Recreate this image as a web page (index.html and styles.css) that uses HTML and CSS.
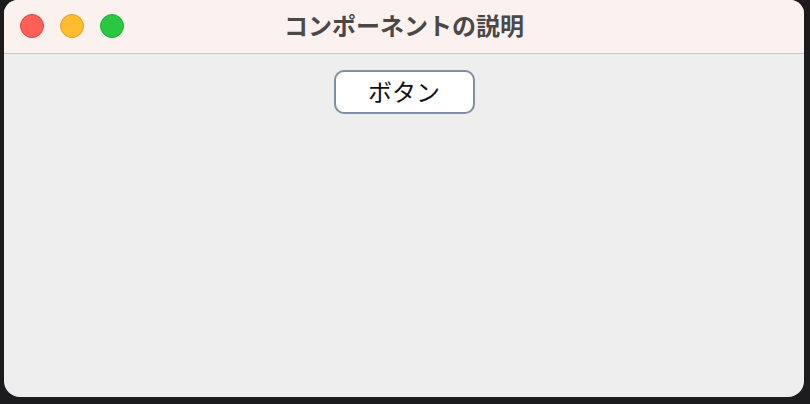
FILE: index.html
```html
<!DOCTYPE html>
<html lang="ja">
  <head>
    <meta charset="UTF-8" />
    <title>コンポーネントの説明</title>
    <link rel="stylesheet" href="styles.css">
  </head>
  <body>
    <div class="window">
      <div class="titlebar">
        <div class="lights">
          <span class="light red"></span>
          <span class="light yellow"></span>
          <span class="light green"></span>
        </div>
        <div class="title">コンポーネントの説明</div>
      </div>
      <div class="content">
        <button type="button" class="btn">ボタン</button>
      </div>
    </div>
  </body>
</html>
```

FILE: styles.css
```css
* {
  box-sizing: border-box;
}
body {
  margin: 0;
  background-color: #1c1c1e;
  font-family: "Noto Sans CJK JP", "Noto Sans", sans-serif;
  height: 404px;
  overflow: hidden;
}
.window {
  margin-left: 4px;
  width: 800px;
  height: 397px;
  background-color: #eeeeee;
  border-radius: 14px 14px 16px 16px;
  overflow: hidden;
}
.titlebar {
  position: relative;
  height: 54px;
  background-color: #fbf2ef;
  border-bottom: 1px solid #c8c6c5;
  display: flex;
  align-items: center;
  justify-content: center;
}
.lights {
  position: absolute;
  left: 16px;
  top: 14px;
  display: flex;
  gap: 16px;
}
.light {
  width: 24px;
  height: 24px;
  border-radius: 50%;
}
.red {
  background-color: #fe5f57;
  border: 1px solid #e2463f;
}
.yellow {
  background-color: #febc2e;
  border: 1px solid #e0a125;
}
.green {
  background-color: #28c840;
  border: 1px solid #20ad33;
}
.title {
  font-size: 24px;
  font-weight: bold;
  color: #4b4847;
  margin-top: -4px;
}
.content {
  display: flex;
  justify-content: center;
  padding-top: 16px;
}
.btn {
  width: 141px;
  height: 44px;
  background-color: #ffffff;
  border: 2px solid #7e8ea2;
  border-radius: 10px;
  font-family: "Noto Sans CJK JP", sans-serif;
  font-size: 24px;
  color: #111111;
  padding: 0 0 2px;
  line-height: 1;
}
```
